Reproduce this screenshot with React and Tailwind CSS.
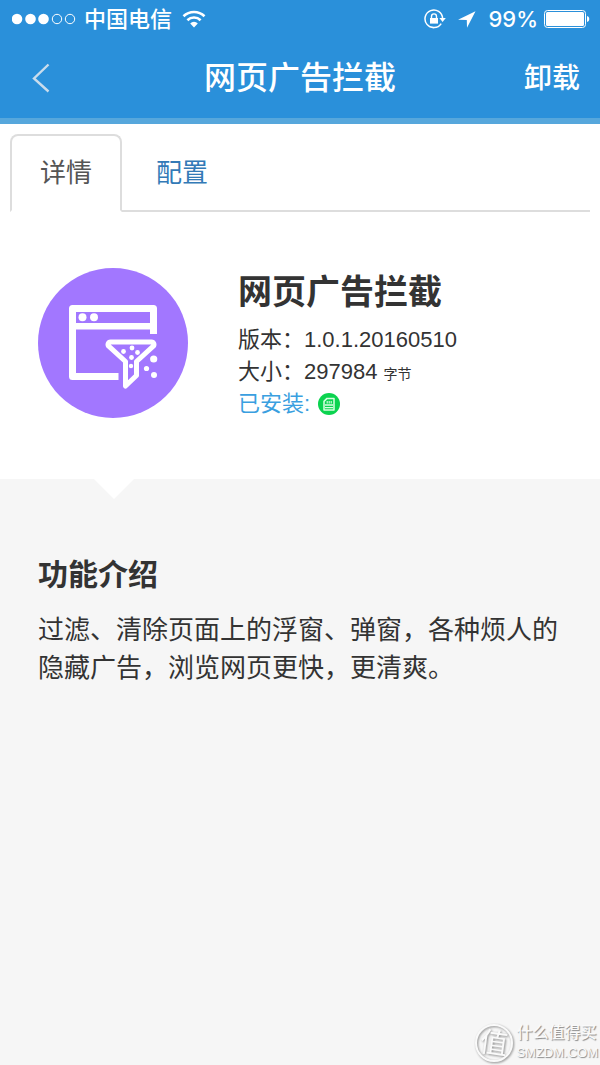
import React, { useState } from 'react';

const tabs = [
  { id: 'detail', label: '详情' },
  { id: 'config', label: '配置' },
];

function StatusBar() {
  return (
    <div className="flex h-[38px] items-center justify-between pl-3 pr-2.5 text-[22px] leading-8 font-medium">
      <div className="flex items-center">
        <svg width="64" height="12" viewBox="0 0 64 12" fill="#fff" className="mr-2">
          <circle cx="5" cy="6" r="5.3" />
          <circle cx="18.5" cy="6" r="5.3" />
          <circle cx="31.5" cy="6" r="5.3" />
          <circle cx="45" cy="6" r="4.7" fill="none" stroke="#fff" />
          <circle cx="58" cy="6" r="4.7" fill="none" stroke="#fff" />
        </svg>
        <span>中国电信</span>
        <svg width="24" height="18" viewBox="0 0 24 18" fill="none" stroke="#fff" strokeWidth="2.6" className="ml-2.5">
          <path d="M1.5 6.3a15 15 0 0 1 21 0" />
          <path d="M5.4 10.2a9.4 9.4 0 0 1 13.2 0" />
          <path d="M12 17.5 8.2 13.4a5.4 5.4 0 0 1 7.6 0Z" fill="#fff" stroke="none" />
        </svg>
      </div>
      <div className="flex items-center">
        <svg width="22" height="20" viewBox="0 0 22 20" fill="none" stroke="#fff" className="mr-3">
          <path d="M17.2 14.6A8.8 8.8 0 1 1 18.6 9.4" strokeWidth="1.5" />
          <path d="M15.4 9h6.4l-3.2 4Z" fill="#fff" stroke="none" />
          <rect x="6" y="9" width="8" height="5.6" fill="#fff" stroke="none" />
          <path d="M7.5 9.5V7.4a2.5 2.5 0 0 1 5 0v2.1" strokeWidth="1.4" />
        </svg>
        <svg width="18" height="17" viewBox="0 0 18 17" fill="#fff" className="mr-3">
          <path d="M17.5.3 0 8.7l8.8.4.2 7.6Z" />
        </svg>
        <span className="mr-1">99%</span>
        <svg width="48" height="20" viewBox="0 0 48 20" fill="#fff">
          <rect x="2.5" y="1.5" width="41" height="17" rx="3" fill="none" stroke="#fff" />
          <rect x="4" y="3" width="38" height="14" rx="1.5" />
          <path d="M45 7c3 .6 3 5.4 0 6Z" />
        </svg>
      </div>
    </div>
  );
}

function PluginIcon() {
  return (
    <svg viewBox="0 0 150 150" className="size-[150px] shrink-0" role="img" aria-label="网页广告拦截">
      <circle cx="75" cy="75" r="75" fill="#a277ff" />
      <g fill="none" stroke="#fff" strokeWidth="7">
        <path d="M115.5 66V40.5H34.5V108.5H80.5" strokeLinejoin="round" />
        <path d="M34.5 58.3H115.5" strokeWidth="6.5" />
        <path
          d="M72.5 74H113.5a2.5 2.5 0 0 1 1.8 4.2L98.5 93.5V107.5L87.5 118V93.5L70.7 78.2a2.5 2.5 0 0 1 1.8-4.2Z"
          strokeWidth="5"
          strokeLinejoin="round"
        />
      </g>
      <g fill="#fff">
        <circle cx="44.5" cy="49.2" r="4" />
        <circle cx="56" cy="49.2" r="4" />
        <circle cx="85.5" cy="83.5" r="2.4" />
        <circle cx="94" cy="80" r="2.4" />
        <circle cx="99.5" cy="84.5" r="2.4" />
        <circle cx="93.5" cy="89.5" r="2.4" />
        <circle cx="93" cy="98" r="2.2" />
        <circle cx="115.7" cy="91" r="3.6" />
        <circle cx="108.5" cy="100.5" r="2.6" />
        <circle cx="116" cy="107" r="3" />
      </g>
    </svg>
  );
}

function InstalledIcon() {
  return (
    <svg width="22" height="22" viewBox="0 0 22 22" fill="none" stroke="#d8ffe0" aria-hidden="true">
      <circle cx="11" cy="11" r="11" fill="#0bd34f" stroke="none" />
      <path d="M9 5.4h7V17H6V8.4Z" strokeWidth="1.5" strokeLinejoin="round" />
      <path d="M9.2 8v2.4M11.2 8v2.4M13.2 8v2.4" strokeWidth="1.1" />
      <path d="M7 12h8M7 14.6h8" strokeWidth="1.3" />
    </svg>
  );
}

function Watermark() {
  return (
    <div className="absolute right-0.5 bottom-0.5 flex items-center gap-0.5 text-[#fafafa]">
      <svg width="40" height="40" viewBox="0 0 40 40" className="drop-shadow-[1px_1px_1px_#888888]">
        <circle cx="20" cy="20" r="18" fill="none" stroke="#fafafa" strokeWidth="2" />
        <text x="20" y="30" textAnchor="middle" fontSize="28" fill="#fafafa" transform="rotate(8 20 20)">
          值
        </text>
      </svg>
      <div className="font-medium [text-shadow:1px_1px_1px_#888888]">
        <div className="text-base leading-5">什么值得买</div>
        <div className="text-[13px] leading-5">SMZDM.COM</div>
      </div>
    </div>
  );
}

export default function App() {
  const [active, setActive] = useState('detail');

  return (
    <div className="relative flex min-h-screen flex-col bg-white font-['Liberation_Sans','Noto_Sans_CJK_SC',sans-serif] text-[#333333]">
      <header className="border-b-6 border-[#56a7dc] bg-[#2a90da] font-['Inter','Noto_Sans_CJK_SC',sans-serif] text-white">
        <StatusBar />
        <div className="grid h-20 grid-cols-[1fr_auto_1fr] items-center px-5">
          <button type="button" aria-label="返回" className="justify-self-start pl-3">
            <svg width="18" height="30" viewBox="0 0 18 30" fill="none" stroke="#c9dcec" strokeWidth="2.4">
              <path d="M16.5 1.5 2 15.5l14.5 13" />
            </svg>
          </button>
          <h1 className="text-[32px] leading-10 font-medium">网页广告拦截</h1>
          <button type="button" className="justify-self-end text-[28px] leading-10 font-medium">卸载</button>
        </div>
      </header>

      {/* Tabs */}
      <div role="tablist" className="mx-2.5 mt-2.5 flex border-b-2 border-[#dddddd]">
        {tabs.map(t => (
          <button
            key={t.id}
            type="button"
            role="tab"
            aria-selected={active === t.id}
            onClick={() => setActive(t.id)}
            className={`-mb-0.5 h-[78px] rounded-t-lg border-2 px-7 text-[26px] leading-9 ${
              active === t.id
                ? 'border-[#dddddd] border-b-white bg-white text-[#555555]'
                : 'ml-1 border-transparent text-[#337ab7]'
            }`}
          >
            {t.label}
          </button>
        ))}
      </div>

      {/* Plugin summary */}
      <section className="flex gap-[50px] px-[38px] pt-14 pb-[59px]">
        <PluginIcon />
        <div className="text-[22px] leading-8">
          <h2 className="mb-2 text-[34px] leading-12 font-bold">网页广告拦截</h2>
          <p>版本：1.0.1.20160510</p>
          <p>大小：297984 <small className="text-sm">字节</small></p>
          <p className="flex items-center gap-2 text-[#3a9fe0]">
            已安装: <InstalledIcon />
          </p>
        </div>
      </section>

      {/* Description */}
      <section className="flex-1 bg-[#f6f6f6] px-[38px]">
        <svg width="40" height="20" viewBox="0 0 40 20" fill="#fff" className="ml-14">
          <path d="M0 0h40L20 20Z" />
        </svg>
        <h3 className="mt-14 mb-4 text-[30px] leading-10 font-bold">功能介绍</h3>
        <p className="text-[26px] leading-[38px]">
          过滤、清除页面上的浮窗、弹窗，各种烦人的隐藏广告，浏览网页更快，更清爽。
        </p>
      </section>

      <Watermark />
    </div>
  );
}
